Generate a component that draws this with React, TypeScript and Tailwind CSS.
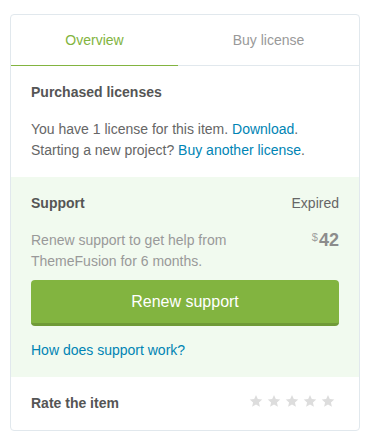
import React from "react";

const Star = () => (
  <svg width="14" height="14" viewBox="0 0 24 24" className="block">
    <polygon
      points="12,1.5 15.1,8.6 22.8,9.3 17,14.4 18.7,22 12,18 5.3,22 7,14.4 1.2,9.3 8.9,8.6"
      fill="#dddddd"
    />
  </svg>
);

export default function App() {
  return (
    <div
      className="bg-white min-h-[440px] pl-[10px] pt-[14px]"
      style={{ fontFamily: '"Liberation Sans", Arial, sans-serif' }}
    >
      <div className="w-[350px] border border-[#e1e8ed] rounded-[4px] bg-white overflow-hidden">
        {/* Tabs */}
        <div className="flex">
          <div className="w-[167px] h-[51px] border-b border-[#82b440] flex items-center justify-center text-[14px] text-[#82b440]">
            Overview
          </div>
          <div className="flex-1 h-[51px] border-b border-[#e1e8ed] flex items-center justify-center text-[14px] text-[#999999]">
            Buy license
          </div>
        </div>

        {/* Purchased */}
        <div className="px-5 py-4 text-[14px] leading-[21px]">
          <div className="font-bold text-[#555555]">Purchased licenses</div>
          <p className="mt-4 text-[#666666]">
            You have 1 license for this item.{" "}
            <a className="text-[#0084b4]">Download</a>.
            <br />
            Starting a new project?{" "}
            <a className="text-[#0084b4]">Buy another license</a>.
          </p>
        </div>

        {/* Support */}
        <div className="bg-[#f1faef] px-5 pt-4 pb-4 text-[14px] leading-[21px]">
          <div className="flex justify-between">
            <span className="font-bold text-[#555555]">Support</span>
            <span className="text-[#666666]">Expired</span>
          </div>
          <div className="mt-4 flex justify-between">
            <p className="text-[#999999]">
              Renew support to get help from
              <br />
              ThemeFusion for 6 months.
            </p>
            <div className="flex items-start">
              <span className="text-[11px] leading-none mt-[2px] text-[#a0a0a0] mr-[1px]">$</span>
              <span className="text-[18px] leading-[21px] font-bold text-[#8c8c8c]">42</span>
            </div>
          </div>
          <button className="mt-2 w-full h-[46px] rounded-[4px] bg-[#82b440] border-b-[3px] border-[#6f9a37] text-white text-[16px] flex items-center justify-center">
            Renew support
          </button>
          <div className="mt-[14px]">
            <a className="text-[#0084b4]">How does support work?</a>
          </div>
        </div>

        {/* Rate */}
        <div className="px-5 py-4 flex justify-between items-center text-[14px] leading-[21px]">
          <span className="font-bold text-[#555555]">Rate the item</span>
          <div className="flex gap-[4px] mr-[4px] -mt-[6px]">
            <Star />
            <Star />
            <Star />
            <Star />
            <Star />
          </div>
        </div>
      </div>
    </div>
  );
}
